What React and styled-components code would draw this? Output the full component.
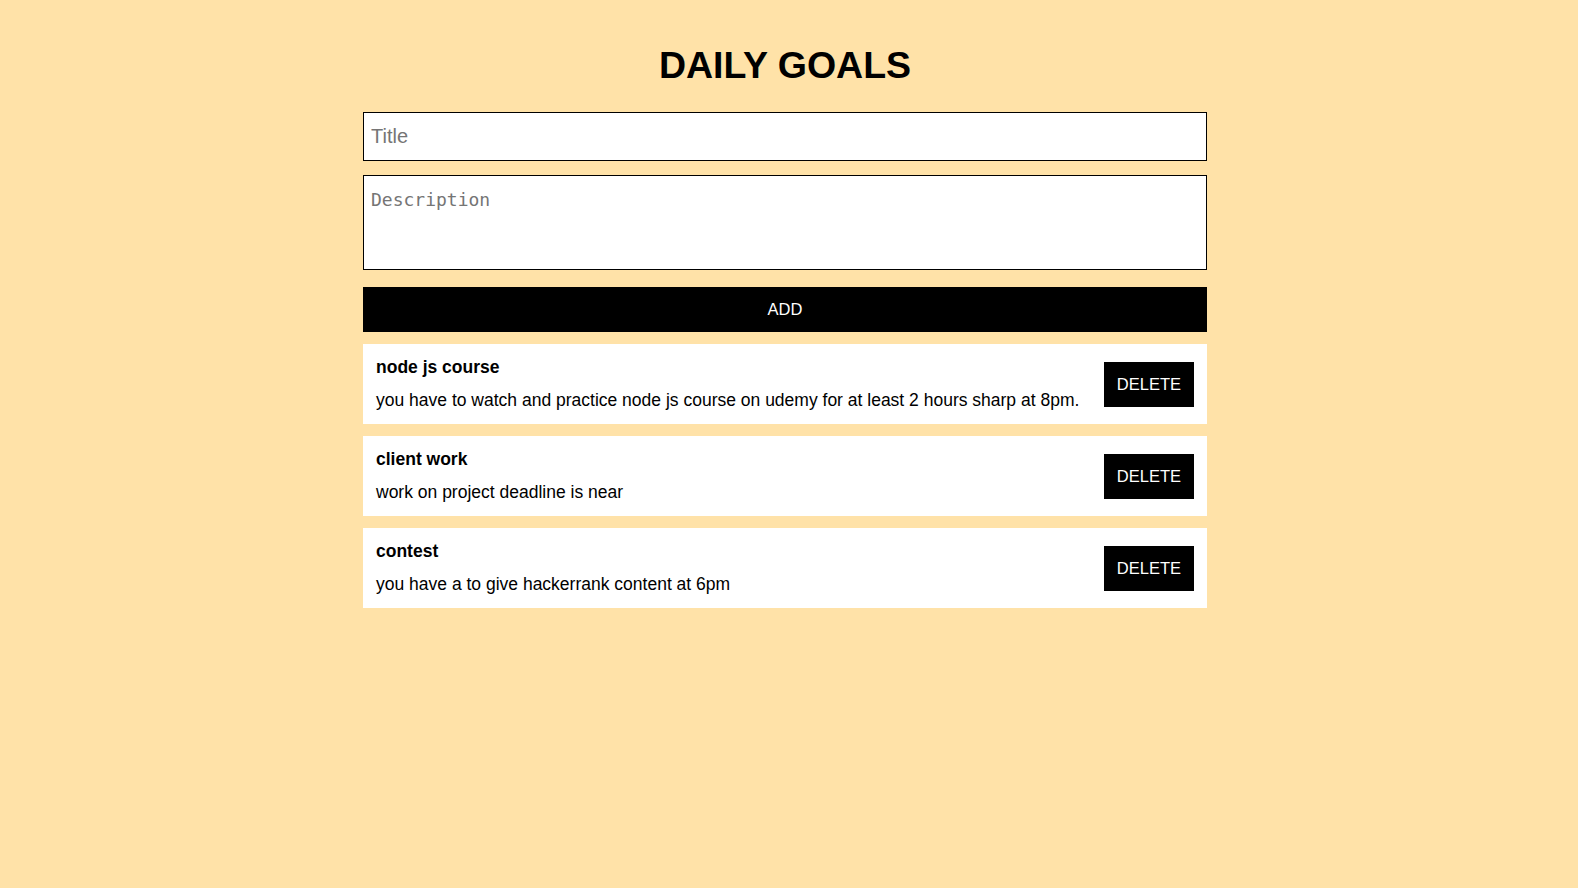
import React from 'react'
import styled, { createGlobalStyle } from 'styled-components'

const GlobalStyle = createGlobalStyle`
  body {
    margin: 0;
    background: #ffe2a8;
    font-family: "Liberation Sans", Arial, sans-serif;
  }
`

const Page = styled.div`
  padding: 44px 8px 0 0;
`

const Container = styled.div`
  width: 844px;
  margin: 0 auto;
`

const Heading = styled.h1`
  margin: 0 0 26px;
  text-align: center;
  font-size: 37.5px;
  font-weight: bold;
  line-height: 42px;
`

const Form = styled.form`
  display: flex;
  flex-direction: column;
`

const TitleInput = styled.input`
  box-sizing: border-box;
  height: 49px;
  margin-bottom: 14px;
  padding: 0 7px;
  border: 1px solid #000;
  background: #fff;
  font-family: "Liberation Sans", Arial, sans-serif;
  font-size: 20px;
  outline: none;
  &::placeholder { color: #757575; }
`

const DescInput = styled.textarea`
  box-sizing: border-box;
  height: 95px;
  margin-bottom: 17px;
  padding: 13px 7px;
  border: 1px solid #000;
  background: #fff;
  font-family: "DejaVu Sans Mono", "Liberation Mono", monospace;
  font-size: 18px;
  resize: none;
  outline: none;
  &::placeholder { color: #757575; }
`

const Button = styled.button`
  height: 45px;
  padding: 0 ${p => (p.$wide ? '0' : '13px')};
  border: none;
  background: #000;
  color: #fff;
  font-family: "Liberation Sans", Arial, sans-serif;
  font-size: 16.5px;
  cursor: pointer;
`

const List = styled.div`
  display: flex;
  flex-direction: column;
  gap: 12px;
  margin-top: 12px;
`

const Card = styled.div`
  display: flex;
  align-items: center;
  justify-content: space-between;
  padding: 13px;
  background: #fff;
`

const Info = styled.div`
  display: flex;
  flex-direction: column;
  gap: 12px;
`

const GoalTitle = styled.div`
  font-size: 17.5px;
  line-height: 21px;
  font-weight: bold;
`

const GoalText = styled.div`
  font-size: 17.5px;
  line-height: 21px;
`

const goals = [
  { title: 'node js course', text: 'you have to watch and practice node js course on udemy for at least 2 hours sharp at 8pm.' },
  { title: 'client work', text: 'work on project deadline is near' },
  { title: 'contest', text: 'you have a to give hackerrank content at 6pm' },
]

const App = () => {
  return (
    <Page>
      <GlobalStyle />
      <Container>
        <Heading>DAILY GOALS</Heading>
        <Form onSubmit={e => e.preventDefault()}>
          <TitleInput placeholder="Title" autoFocus />
          <DescInput placeholder="Description" />
          <Button $wide type="submit">ADD</Button>
        </Form>
        <List>
          {goals.map(g => (
            <Card key={g.title}>
              <Info>
                <GoalTitle>{g.title}</GoalTitle>
                <GoalText>{g.text}</GoalText>
              </Info>
              <Button>DELETE</Button>
            </Card>
          ))}
        </List>
      </Container>
    </Page>
  )
}

export default App
